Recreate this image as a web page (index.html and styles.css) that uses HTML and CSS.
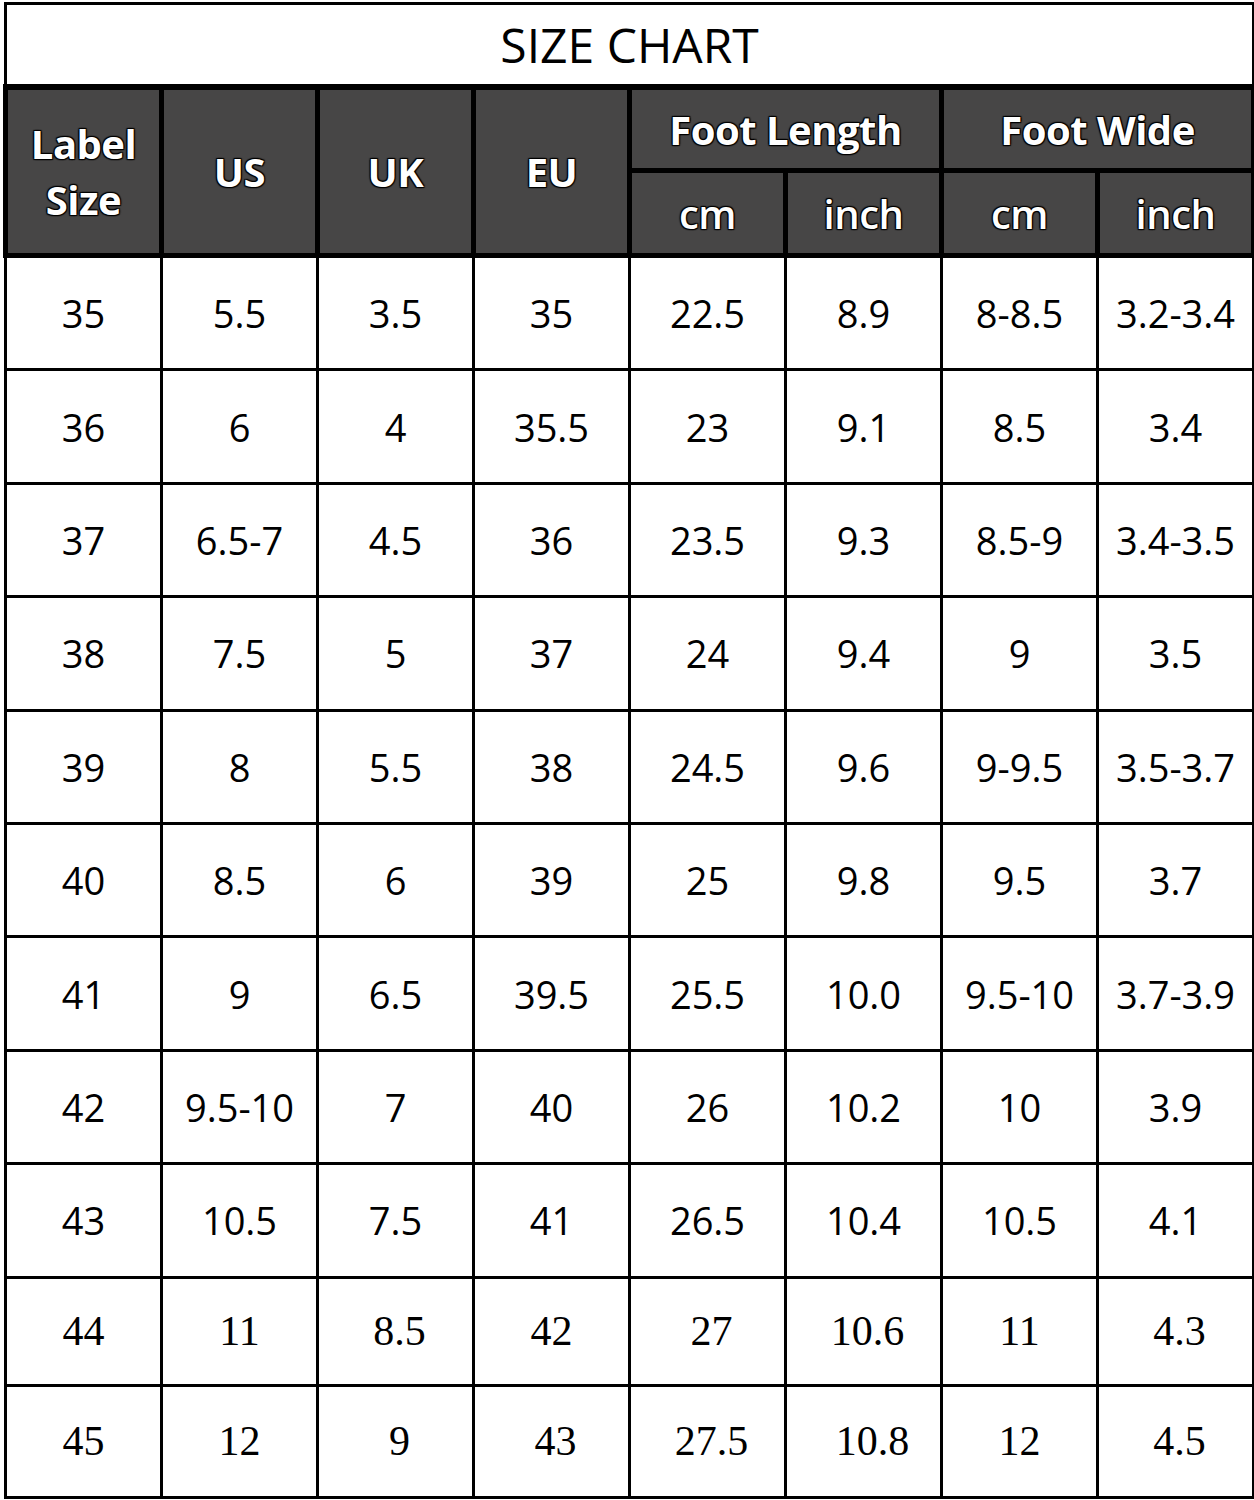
FILE: index.html
```html
<!DOCTYPE html>
<html lang="en">
<head>
<meta charset="utf-8">
<title>Size Chart</title>
<link rel="stylesheet" href="styles.css">
</head>
<body>
<div class="page">
<table class="chart">
  <colgroup>
    <col><col><col><col><col><col><col><col>
  </colgroup>
  <thead>
    <tr class="title-row"><th colspan="8" class="title">SIZE CHART</th></tr>
    <tr class="head-top">
      <th rowspan="2" class="hd two-line">Label<br>Size</th>
      <th rowspan="2" class="hd">US</th>
      <th rowspan="2" class="hd">UK</th>
      <th rowspan="2" class="hd">EU</th>
      <th colspan="2" class="hd">Foot Length</th>
      <th colspan="2" class="hd">Foot Wide</th>
    </tr>
    <tr class="head-sub">
      <th class="hd">cm</th>
      <th class="hd">inch</th>
      <th class="hd">cm</th>
      <th class="hd">inch</th>
    </tr>
  </thead>
  <tbody>
    <tr><td>35</td><td>5.5</td><td>3.5</td><td>35</td><td>22.5</td><td>8.9</td><td>8-8.5</td><td>3.2-3.4</td></tr>
    <tr><td>36</td><td>6</td><td>4</td><td>35.5</td><td>23</td><td>9.1</td><td>8.5</td><td>3.4</td></tr>
    <tr><td>37</td><td>6.5-7</td><td>4.5</td><td>36</td><td>23.5</td><td>9.3</td><td>8.5-9</td><td>3.4-3.5</td></tr>
    <tr><td>38</td><td>7.5</td><td>5</td><td>37</td><td>24</td><td>9.4</td><td>9</td><td>3.5</td></tr>
    <tr><td>39</td><td>8</td><td>5.5</td><td>38</td><td>24.5</td><td>9.6</td><td>9-9.5</td><td>3.5-3.7</td></tr>
    <tr><td>40</td><td>8.5</td><td>6</td><td>39</td><td>25</td><td>9.8</td><td>9.5</td><td>3.7</td></tr>
    <tr><td>41</td><td>9</td><td>6.5</td><td>39.5</td><td>25.5</td><td>10.0</td><td>9.5-10</td><td>3.7-3.9</td></tr>
    <tr><td>42</td><td>9.5-10</td><td>7</td><td>40</td><td>26</td><td>10.2</td><td>10</td><td>3.9</td></tr>
    <tr><td>43</td><td>10.5</td><td>7.5</td><td>41</td><td>26.5</td><td>10.4</td><td>10.5</td><td>4.1</td></tr>
    <tr class="serif r44"><td>44</td><td>11</td><td class="nudge">8.5</td><td>42</td><td class="nudge">27</td><td class="nudge">10.6</td><td>11</td><td class="nudge">4.3</td></tr>
    <tr class="serif r45"><td>45</td><td>12</td><td class="nudge">9</td><td class="nudge">43</td><td class="nudge">27.5</td><td class="nudge2">10.8</td><td>12</td><td class="nudge">4.5</td></tr>
  </tbody>
</table>
</div>
</body>
</html>
```

FILE: styles.css
```css
html, body {
  margin: 0;
  padding: 0;
  background: #ffffff;
}

.page {
  padding: 2px 3px 0 3px;
}

.chart {
  width: 1248px;
  border-collapse: collapse;
  table-layout: fixed;
  font-family: "Open Sans", "Liberation Sans", sans-serif;
  color: #000;
}

.chart col {
  width: 156px;
}

.chart th,
.chart td {
  border: 3px solid #000;
  text-align: center;
  vertical-align: middle;
  padding: 0;
}

.title {
  height: 79px;
  font-weight: 400;
  font-size: 48px;
  background: #fff;
  border-bottom: 6px solid #000 !important;
}

.hd {
  background: #474646;
  color: #fff;
  font-weight: 700;
  font-size: 40px;
  border: 5px solid #000 !important;
  text-shadow: 0 0 2px #000, 1px 1px 1px #000, -1px -1px 1px #000, 1px -1px 1px #000, -1px 1px 1px #000;
  letter-spacing: -0.5px;
}

.head-top .hd {
  height: 78px;
}

.head-sub .hd {
  height: 80px;
  font-weight: 600;
}

.two-line {
  line-height: 56px;
}

.chart tbody td {
  height: 110.4px;
  font-size: 38px;
  font-weight: 400;
}

.chart tbody tr.serif td {
  font-family: "Liberation Serif", "Times New Roman", serif;
  font-size: 42px;
}

.chart tbody tr.r44 td {
  height: 105px;
}

.chart tbody tr.r45 td {
  height: 109px;
}

.chart tbody td.nudge {
  padding-left: 8px;
}

.chart tbody td.nudge2 {
  padding-left: 18px;
}
```
